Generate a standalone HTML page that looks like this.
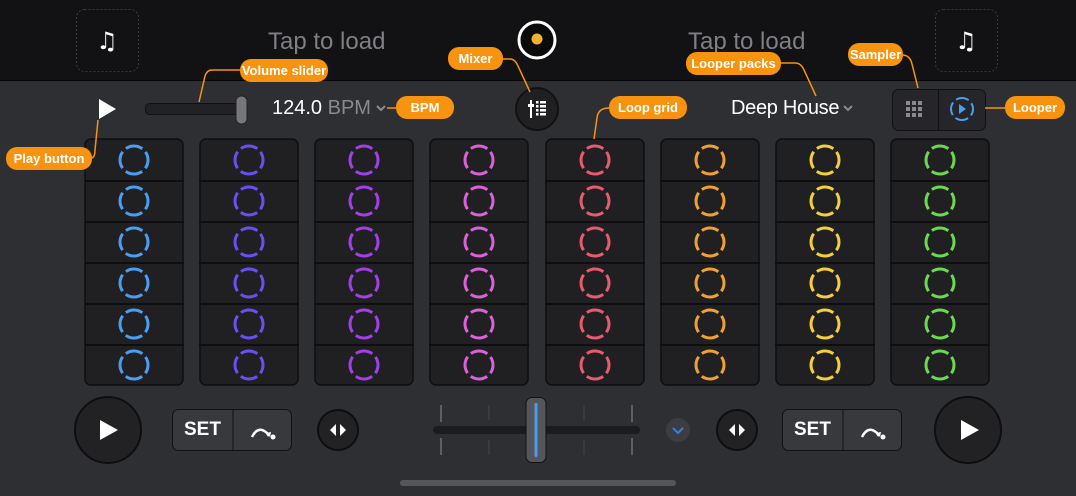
<!DOCTYPE html>
<html><head><meta charset="utf-8"><style>
*{margin:0;padding:0;box-sizing:border-box}
body{width:1076px;height:496px;background:#2e2f33;overflow:hidden;position:relative;font-family:"Liberation Sans",sans-serif}
.top{position:absolute;left:0;top:0;width:1076px;height:81px;background:#121214;border-bottom:1px solid #050505}
.t{position:absolute;white-space:nowrap;z-index:3}
.pill{position:absolute;background:#f7930e;color:#fff;font-weight:bold;font-size:13px;border-radius:11px;height:23px;line-height:23px;text-align:center;z-index:3}
svg{z-index:1}
</style></head><body>
<div class="top"></div>
<svg width="1076" height="496" style="position:absolute;left:0;top:0">
<defs>
<circle id="c" cx="0" cy="0" r="14" fill="none" stroke-width="3" stroke-dasharray="17.5 4.5" stroke-dashoffset="8.75"/>
</defs>
<rect x="76.5" y="9.5" width="62" height="62" rx="8" fill="none" stroke="#3a3a3e" stroke-dasharray="2 2"/>
<rect x="935.5" y="9.5" width="62" height="62" rx="8" fill="none" stroke="#3a3a3e" stroke-dasharray="2 2"/>
<g fill="#fff" font-weight="bold"><text x="107" y="49" font-size="24" text-anchor="middle" font-family="DejaVu Sans">♫</text><text x="966" y="49" font-size="24" text-anchor="middle" font-family="DejaVu Sans">♫</text></g>
<circle cx="537" cy="40" r="18" fill="#0a0a0a" stroke="#fff" stroke-width="3"/>
<circle cx="537" cy="39" r="5.5" fill="#f0b030"/>
<path d="M99 99 L116 109 L99 119Z" fill="#fff"/>
<rect x="145.5" y="103.5" width="95" height="11" rx="4" fill="#222225" stroke="#111"/>
<rect x="236" y="96" width="11" height="28" rx="5" fill="#77777b" stroke="#222"/>
<path d="M377 106 l4 4 l4 -4" fill="none" stroke="#8a8a8e" stroke-width="2"/>
<path d="M844 106 l4 4 l4 -4" fill="none" stroke="#8a8a8e" stroke-width="2"/>
<circle cx="537" cy="109" r="21" fill="#202023" stroke="#111" stroke-width="2"/>
<g fill="#fff"><rect x="530" y="100" width="2" height="18"/><rect x="528" y="104" width="6" height="3"/>
<rect x="536" y="101" width="2.5" height="2.5"/><rect x="540" y="101" width="6" height="2.5"/><rect x="536" y="105" width="2.5" height="2.5"/><rect x="540" y="105" width="6" height="2.5"/><rect x="536" y="109" width="2.5" height="2.5"/><rect x="540" y="109" width="6" height="2.5"/><rect x="536" y="113" width="2.5" height="2.5"/><rect x="540" y="113" width="6" height="2.5"/></g>
<rect x="892.5" y="89.5" width="93" height="41" rx="6" fill="#26262a" stroke="#111"/>
<line x1="938.5" y1="90" x2="938.5" y2="130" stroke="#111"/>
<g fill="#8a8a8e"><rect x="906" y="101" width="4" height="4"/><rect x="912" y="101" width="4" height="4"/><rect x="918" y="101" width="4" height="4"/><rect x="906" y="107" width="4" height="4"/><rect x="912" y="107" width="4" height="4"/><rect x="918" y="107" width="4" height="4"/><rect x="906" y="113" width="4" height="4"/><rect x="912" y="113" width="4" height="4"/><rect x="918" y="113" width="4" height="4"/></g>
<circle cx="962" cy="109" r="11" fill="none" stroke="#4a9ef0" stroke-width="2" stroke-dasharray="13.3 4" stroke-dashoffset="6.6"/>
<path d="M959 104 L966 109 L959 114Z" fill="#4a9ef0"/>
<g fill="#202023" stroke="#0e0e10" stroke-width="1.5">
<rect x="85" y="139" width="98" height="246" rx="6"/><rect x="200" y="139" width="98" height="246" rx="6"/><rect x="315" y="139" width="98" height="246" rx="6"/><rect x="430" y="139" width="98" height="246" rx="6"/><rect x="546" y="139" width="98" height="246" rx="6"/><rect x="661" y="139" width="98" height="246" rx="6"/><rect x="776" y="139" width="98" height="246" rx="6"/><rect x="891" y="139" width="98" height="246" rx="6"/>
</g>
<g stroke="#0e0e10" stroke-width="2"><path d="M85 181H989M85 222H989M85 263H989M85 304H989M85 345H989"/></g>
<g fill="#2e2f33"><rect x="184" y="139" width="15" height="247"/><rect x="299" y="139" width="15" height="247"/><rect x="414" y="139" width="15" height="247"/><rect x="529" y="139" width="16" height="247"/><rect x="645" y="139" width="15" height="247"/><rect x="760" y="139" width="15" height="247"/><rect x="875" y="139" width="15" height="247"/></g>
<g stroke="#4a9ef0"><use href="#c" x="134" y="160"/><use href="#c" x="134" y="201"/><use href="#c" x="134" y="242"/><use href="#c" x="134" y="283"/><use href="#c" x="134" y="324"/><use href="#c" x="134" y="365"/></g>
<g stroke="#6650f0"><use href="#c" x="249" y="160"/><use href="#c" x="249" y="201"/><use href="#c" x="249" y="242"/><use href="#c" x="249" y="283"/><use href="#c" x="249" y="324"/><use href="#c" x="249" y="365"/></g>
<g stroke="#a040e6"><use href="#c" x="364" y="160"/><use href="#c" x="364" y="201"/><use href="#c" x="364" y="242"/><use href="#c" x="364" y="283"/><use href="#c" x="364" y="324"/><use href="#c" x="364" y="365"/></g>
<g stroke="#d862d6"><use href="#c" x="479" y="160"/><use href="#c" x="479" y="201"/><use href="#c" x="479" y="242"/><use href="#c" x="479" y="283"/><use href="#c" x="479" y="324"/><use href="#c" x="479" y="365"/></g>
<g stroke="#e85a70"><use href="#c" x="595" y="160"/><use href="#c" x="595" y="201"/><use href="#c" x="595" y="242"/><use href="#c" x="595" y="283"/><use href="#c" x="595" y="324"/><use href="#c" x="595" y="365"/></g>
<g stroke="#f0a030"><use href="#c" x="710" y="160"/><use href="#c" x="710" y="201"/><use href="#c" x="710" y="242"/><use href="#c" x="710" y="283"/><use href="#c" x="710" y="324"/><use href="#c" x="710" y="365"/></g>
<g stroke="#f2d03c"><use href="#c" x="825" y="160"/><use href="#c" x="825" y="201"/><use href="#c" x="825" y="242"/><use href="#c" x="825" y="283"/><use href="#c" x="825" y="324"/><use href="#c" x="825" y="365"/></g>
<g stroke="#6cd850"><use href="#c" x="940" y="160"/><use href="#c" x="940" y="201"/><use href="#c" x="940" y="242"/><use href="#c" x="940" y="283"/><use href="#c" x="940" y="324"/><use href="#c" x="940" y="365"/></g>
<circle cx="108" cy="430" r="33" fill="#222225" stroke="#0e0e10" stroke-width="2"/>
<path d="M100 420 L118 430 L100 440Z" fill="#fff"/>
<circle cx="968" cy="430" r="33" fill="#222225" stroke="#0e0e10" stroke-width="2"/>
<path d="M961 420 L979 430 L961 440Z" fill="#fff"/>
<rect x="172.5" y="409.5" width="119" height="41" rx="6" fill="#38393d" stroke="#111"/>
<line x1="233" y1="410" x2="233" y2="450" stroke="#111"/>
<rect x="782.5" y="409.5" width="119" height="41" rx="6" fill="#38393d" stroke="#111"/>
<line x1="843" y1="410" x2="843" y2="450" stroke="#111"/>
<g fill="none" stroke="#fff" stroke-width="2.5"><path d="M252 437 q6 -12 15 -4 l2 3"/><path d="M862 437 q6 -12 15 -4 l2 3"/></g>
<g fill="#fff"><path d="M266 433 l5 -1 l-1 5z"/><circle cx="273" cy="437" r="2.5"/><path d="M876 433 l5 -1 l-1 5z"/><circle cx="883" cy="437" r="2.5"/></g>
<circle cx="338" cy="430" r="20" fill="#222225" stroke="#0e0e10" stroke-width="2"/>
<path d="M336 424 L330 430 L336 436Z M340 424 L346 430 L340 436Z" fill="#fff"/>
<circle cx="737" cy="430" r="20" fill="#222225" stroke="#0e0e10" stroke-width="2"/>
<path d="M735 424 L729 430 L735 436Z M739 424 L745 430 L739 436Z" fill="#fff"/>
<g stroke="#5f5f63" stroke-width="2"><path d="M441 405v17M441 438v17M632 405v17M632 438v17"/></g>
<g stroke="#47474b" stroke-width="1"><path d="M489 405v15M489 440v15M584 405v15M584 440v15"/></g>
<rect x="433" y="426" width="207" height="8" rx="4" fill="#1c1c1e"/>
<rect x="526" y="397.5" width="20" height="65" rx="6" fill="#55565a" stroke="#111"/>
<rect x="534.5" y="403" width="3" height="54" rx="1.5" fill="#4a9ef0"/>
<circle cx="678" cy="430" r="12" fill="#3c3d42"/>
<path d="M673 428 l5 5 l5 -5" fill="none" stroke="#3a7ed8" stroke-width="2"/>
<rect x="400" y="480" width="276" height="6" rx="3" fill="#55565a"/>
<g fill="none" stroke="#f7930e" stroke-width="1.5">
<path d="M246 70 H212 Q207 70 205 76 L199 102"/>
<path d="M91 158 Q95 158 95 150 L98 120"/>
<path d="M387 108 H396"/>
<path d="M502 59 H510 Q515 59 518 66 L530 92"/>
<path d="M609 108 Q598 108 597 118 L594 139"/>
<path d="M780 63 H795 Q801 63 804 70 L816 96"/>
<path d="M902 55 Q910 55 912 64 L918 88"/>
<path d="M985 108 H1005"/>
</g>
</svg>
<div class="t" style="left:268px;top:28px;font-size:24px;color:#7f7f84">Tap to load</div>
<div class="t" style="left:688px;top:28px;font-size:24px;color:#7f7f84">Tap to load</div>
<div class="t" style="left:272px;top:97px;font-size:20px;color:#fff">124.0 <span style="color:#8a8a8e">BPM</span></div>
<div class="t" style="left:731px;top:97px;font-size:20px;color:#fff;letter-spacing:-0.3px">Deep House</div>
<div class="t" style="left:184px;top:419px;font-size:19px;color:#fff;font-weight:bold">SET</div>
<div class="t" style="left:794px;top:419px;font-size:19px;color:#fff;font-weight:bold">SET</div>
<div class="pill" style="left:240px;top:59px;width:88px">Volume slider</div>
<div class="pill" style="left:6px;top:147px;width:86px">Play button</div>
<div class="pill" style="left:396px;top:96px;width:58px">BPM</div>
<div class="pill" style="left:448px;top:47px;width:55px">Mixer</div>
<div class="pill" style="left:609px;top:96px;width:78px">Loop grid</div>
<div class="pill" style="left:686px;top:52px;width:95px">Looper packs</div>
<div class="pill" style="left:848px;top:43px;width:55px">Sampler</div>
<div class="pill" style="left:1005px;top:96px;width:60px">Looper</div>
</body></html>
